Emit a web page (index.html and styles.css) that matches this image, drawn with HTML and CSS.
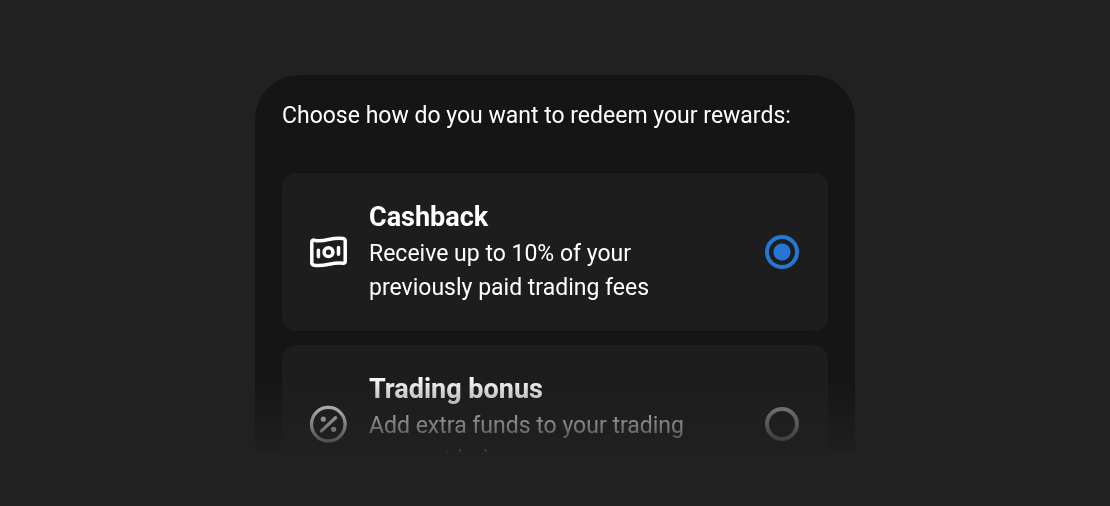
FILE: index.html
```html
<!DOCTYPE html>
<html lang="en">
<head>
<meta charset="utf-8">
<meta name="viewport" content="width=device-width, initial-scale=1">
<title>Redeem rewards</title>
<link rel="stylesheet" href="styles.css">
</head>
<body>
<main class="page">
  <form class="panel">
    <fieldset class="options">
      <legend class="heading">Choose how do you want to redeem your rewards:</legend>
      <label class="card">
        <svg class="icon" viewBox="0 0 40 40" fill="none" stroke="currentColor" stroke-width="3.5" stroke-linecap="round" stroke-linejoin="round" aria-hidden="true">
          <path d="M2.8 10C2.8 8.5 3.8 7.9 5.2 8.2C15.5 10.9 22.5 4.6 34 6.4C35.5 6.7 36.2 7.6 36.2 9V29.4C36.2 30.8 35.3 31.5 34 31.3C23.5 29.6 16.5 34.9 5.2 33.2C3.7 33 2.8 32.1 2.8 30.7Z"/>
          <circle cx="19.5" cy="20.2" r="4.4"/>
          <path d="M9.4 18.2V24.8M29.5 15.6V22.2"/>
        </svg>
        <span class="copy">
          <span class="title">Cashback</span>
          <span class="description">Receive up to 10% of your previously paid trading fees</span>
        </span>
        <input class="radio" type="radio" name="reward" value="cashback" checked>
      </label>
      <label class="card">
        <svg class="icon" viewBox="0 0 40 40" fill="none" stroke="currentColor" stroke-width="3.3" stroke-linecap="round" aria-hidden="true">
          <circle cx="19.3" cy="20.2" r="16.8"/>
          <path d="M12.5 26.9L26.5 13.7"/>
          <circle cx="14.3" cy="15.2" r="2.6" fill="currentColor" stroke="none"/>
          <circle cx="24.6" cy="25.3" r="2.6" fill="currentColor" stroke="none"/>
        </svg>
        <span class="copy">
          <span class="title">Trading bonus</span>
          <span class="description">Add extra funds to your trading account balance</span>
        </span>
        <input class="radio" type="radio" name="reward" value="bonus">
      </label>
    </fieldset>
  </form>
</main>
</body>
</html>
```
FILE: styles.css
```css
* {
  box-sizing: border-box;
}

body {
  margin: 0;
  background: #212121;
  color: #fff;
  font-family: Roboto, sans-serif;
  font-size: 23px;
  line-height: 34px;
}

.page {
  display: flex;
  justify-content: center;
  height: 100vh;
  padding: 75px 16px 54px;
}

.panel {
  width: 100%;
  max-width: 600px;
  height: 100%;
  padding: 24px 27px 0;
  overflow: hidden;
  border-radius: 44px 44px 0 0;
  background: #151515;
  mask-image: linear-gradient(#000 calc(100% - 76px), transparent calc(100% + 8px));
}

.options {
  display: flex;
  flex-direction: column;
  gap: 14px;
  min-width: 0;
  margin: 0;
  padding: 0;
  border: 0;
}

.heading {
  margin-bottom: 40px;
  padding: 0;
}

.card {
  display: flex;
  align-items: center;
  gap: 20px;
  padding: 25px 29px 26px 27px;
  border-radius: 14px;
  background: #1d1d1d;
  cursor: pointer;
}

.icon {
  flex: none;
  width: 40px;
  height: 40px;
}

.copy {
  flex: 1;
  max-width: 336px;
}

.title,
.description {
  display: block;
}

.title {
  margin-bottom: 1px;
  font-size: 27px;
  font-weight: 700;
  line-height: 38px;
}

.radio {
  appearance: none;
  flex: none;
  width: 34px;
  height: 34px;
  margin: 0 0 0 auto;
  border: 4px solid #a0a0a0;
  border-radius: 50%;
  cursor: pointer;
}

.radio:checked {
  border-color: #2577d5;
  background: radial-gradient(circle, #2577d5 8px, transparent 9px);
}
```
